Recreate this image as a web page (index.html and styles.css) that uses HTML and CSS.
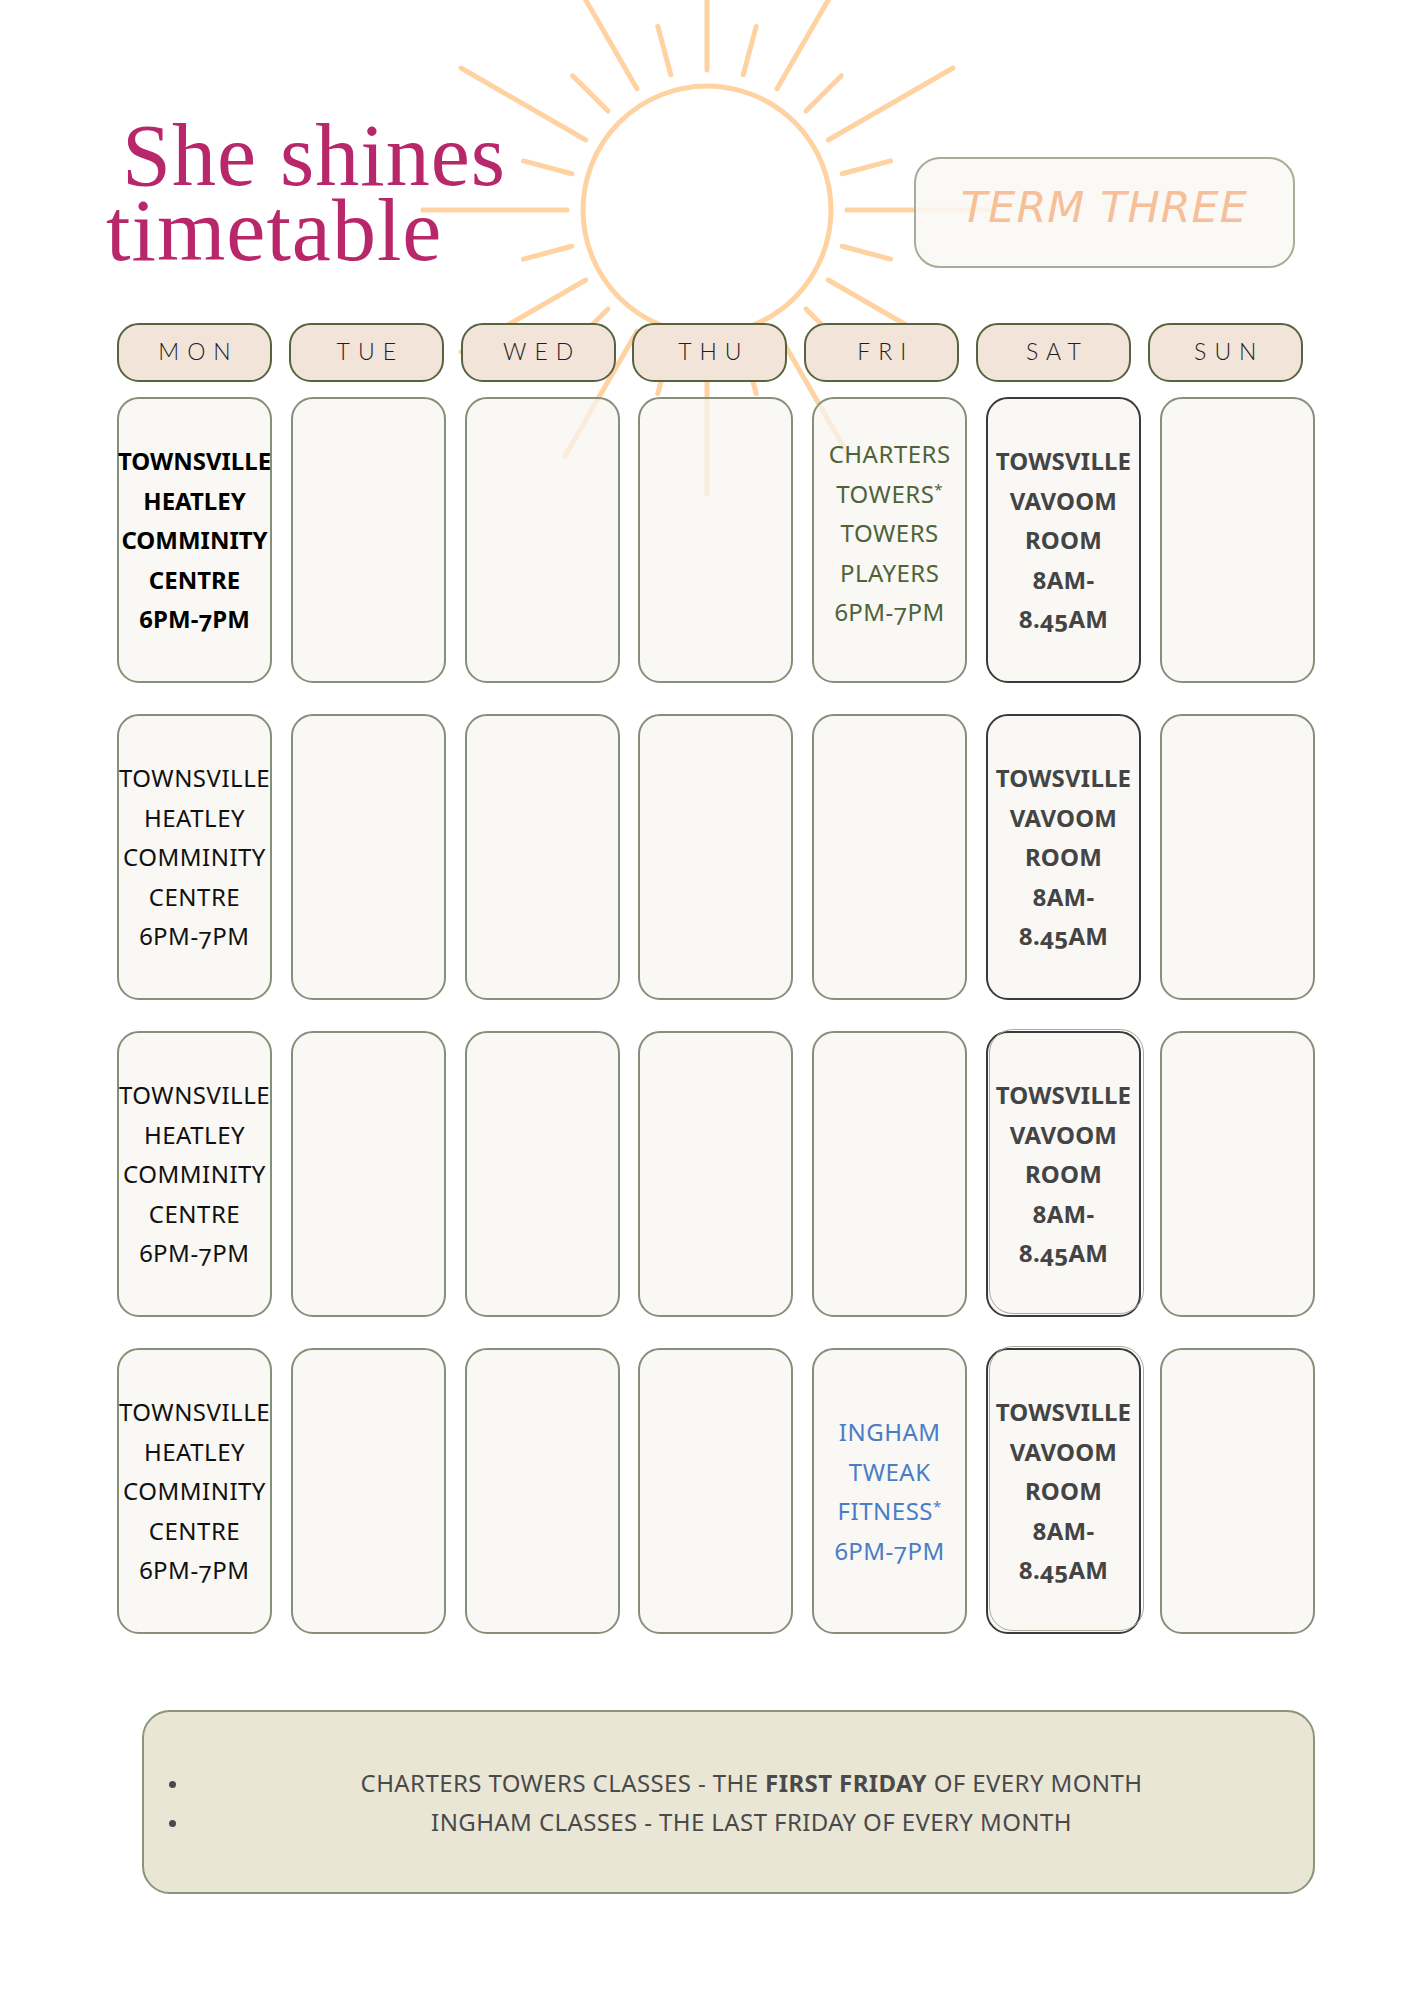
FILE: index.html
```html
<!DOCTYPE html>
<html lang="en">
<head>
<meta charset="utf-8">
<title>She shines timetable</title>
<link rel="stylesheet" href="styles.css">
</head>
<body>
<div class="page">
  <svg class="sun" width="1414" height="520" viewBox="0 0 1414 520" aria-hidden="true">
    <g transform="translate(707 210)" stroke="#FFD2A2" stroke-width="5" stroke-linecap="round" fill="none">
      <circle cx="0" cy="0" r="124"/>
      <line x1="140" y1="0" x2="284" y2="0" transform="rotate(0)"/>
      <line x1="140" y1="0" x2="190" y2="0" transform="rotate(15)"/>
      <line x1="140" y1="0" x2="284" y2="0" transform="rotate(30)"/>
      <line x1="140" y1="0" x2="190" y2="0" transform="rotate(45)"/>
      <line x1="140" y1="0" x2="284" y2="0" transform="rotate(60)"/>
      <line x1="140" y1="0" x2="190" y2="0" transform="rotate(75)"/>
      <line x1="140" y1="0" x2="284" y2="0" transform="rotate(90)"/>
      <line x1="140" y1="0" x2="190" y2="0" transform="rotate(105)"/>
      <line x1="140" y1="0" x2="284" y2="0" transform="rotate(120)"/>
      <line x1="140" y1="0" x2="190" y2="0" transform="rotate(135)"/>
      <line x1="140" y1="0" x2="284" y2="0" transform="rotate(150)"/>
      <line x1="140" y1="0" x2="190" y2="0" transform="rotate(165)"/>
      <line x1="140" y1="0" x2="284" y2="0" transform="rotate(180)"/>
      <line x1="140" y1="0" x2="190" y2="0" transform="rotate(195)"/>
      <line x1="140" y1="0" x2="284" y2="0" transform="rotate(210)"/>
      <line x1="140" y1="0" x2="190" y2="0" transform="rotate(225)"/>
      <line x1="140" y1="0" x2="284" y2="0" transform="rotate(240)"/>
      <line x1="140" y1="0" x2="190" y2="0" transform="rotate(255)"/>
      <line x1="140" y1="0" x2="284" y2="0" transform="rotate(270)"/>
      <line x1="140" y1="0" x2="190" y2="0" transform="rotate(285)"/>
      <line x1="140" y1="0" x2="284" y2="0" transform="rotate(300)"/>
      <line x1="140" y1="0" x2="190" y2="0" transform="rotate(315)"/>
      <line x1="140" y1="0" x2="284" y2="0" transform="rotate(330)"/>
      <line x1="140" y1="0" x2="190" y2="0" transform="rotate(345)"/>
    </g>
  </svg>

  <header class="hero">
    <h1 class="title"><span class="title-line first">She shines</span><span class="title-line">timetable</span></h1>
    <div class="term"><span class="term-text">TERM THREE</span></div>
  </header>

  <div class="days">
    <div class="day">MON</div>
    <div class="day">TUE</div>
    <div class="day">WED</div>
    <div class="day">THU</div>
    <div class="day">FRI</div>
    <div class="day">SAT</div>
    <div class="day">SUN</div>
  </div>

  <div class="grid">
    <!-- row 1 -->
    <div class="cell black bold"><p class="txt">TOWNSVILLE<br>HEATLEY<br>COMMINITY<br>CENTRE<br>6PM-7PM</p></div>
    <div class="cell"></div>
    <div class="cell"></div>
    <div class="cell"></div>
    <div class="cell green raised"><p class="txt">CHARTERS<br>TOWERS<sup>*</sup><br>TOWERS<br>PLAYERS<br>6PM-7PM</p></div>
    <div class="cell sat"><p class="txt">TOWSVILLE<br>VAVOOM<br>ROOM<br>8AM-<br>8.45AM</p></div>
    <div class="cell"></div>
    <!-- row 2 -->
    <div class="cell black"><p class="txt">TOWNSVILLE<br>HEATLEY<br>COMMINITY<br>CENTRE<br>6PM-7PM</p></div>
    <div class="cell"></div>
    <div class="cell"></div>
    <div class="cell"></div>
    <div class="cell"></div>
    <div class="cell sat"><p class="txt">TOWSVILLE<br>VAVOOM<br>ROOM<br>8AM-<br>8.45AM</p></div>
    <div class="cell"></div>
    <!-- row 3 -->
    <div class="cell black"><p class="txt">TOWNSVILLE<br>HEATLEY<br>COMMINITY<br>CENTRE<br>6PM-7PM</p></div>
    <div class="cell"></div>
    <div class="cell"></div>
    <div class="cell"></div>
    <div class="cell"></div>
    <div class="cell sat double"><p class="txt">TOWSVILLE<br>VAVOOM<br>ROOM<br>8AM-<br>8.45AM</p></div>
    <div class="cell"></div>
    <!-- row 4 -->
    <div class="cell black"><p class="txt">TOWNSVILLE<br>HEATLEY<br>COMMINITY<br>CENTRE<br>6PM-7PM</p></div>
    <div class="cell"></div>
    <div class="cell"></div>
    <div class="cell"></div>
    <div class="cell blue"><p class="txt">INGHAM<br>TWEAK<br>FITNESS<sup>*</sup><br>6PM-7PM</p></div>
    <div class="cell sat double"><p class="txt">TOWSVILLE<br>VAVOOM<br>ROOM<br>8AM-<br>8.45AM</p></div>
    <div class="cell"></div>
  </div>

  <section class="notes">
    <ul class="notes-list">
      <li>CHARTERS TOWERS CLASSES - THE <strong>FIRST FRIDAY</strong> OF EVERY MONTH</li>
      <li>INGHAM CLASSES - THE LAST FRIDAY OF EVERY MONTH</li>
    </ul>
  </section>
</div>
</body>
</html>
```

FILE: styles.css
```css
html, body {
  margin: 0;
  padding: 0;
  background: #ffffff;
}

.page {
  position: relative;
  width: 1414px;
  min-height: 2000px;
  padding-top: 118px;
  box-sizing: border-box;
  font-family: "Noto Sans", "Open Sans", sans-serif;
}

.sun {
  position: absolute;
  top: 0;
  left: 0;
  z-index: 0;
}

/* ---------- hero ---------- */
.hero {
  position: relative;
  z-index: 1;
  display: flex;
  justify-content: space-between;
  align-items: flex-start;
  padding: 0 119px 0 106px;
  height: 150px;
}

.title {
  margin: 0;
  font-family: "Liberation Serif", "DejaVu Serif", serif;
  font-weight: 400;
  font-size: 88px;
  line-height: 75px;
  letter-spacing: 1px;
  color: #B8276A;
}

.title-line {
  display: block;
  height: 75px;
}

.title-line.first {
  padding-left: 16px;
}

.term {
  margin-top: 39px;
  width: 381px;
  height: 111px;
  box-sizing: border-box;
  border: 2px solid #A6AD98;
  border-radius: 26px;
  background: rgba(250, 248, 244, 0.85);
  display: flex;
  align-items: center;
  justify-content: center;
  padding-bottom: 12px;
}

.term-text {
  font-family: "DejaVu Sans", sans-serif;
  font-weight: 200;
  font-style: italic;
  font-size: 43px;
  letter-spacing: 1px;
  color: #F6BF98;
}

/* ---------- day headers ---------- */
.days {
  position: relative;
  z-index: 1;
  margin: 55px 0 0 117px;
  display: grid;
  grid-template-columns: repeat(7, 155px);
  column-gap: 16.8px;
}

.day {
  height: 59px;
  box-sizing: border-box;
  border: 2px solid #56633F;
  border-radius: 22px;
  background: #F2E4D9;
  display: flex;
  align-items: center;
  justify-content: center;
  padding: 0 0 4px 8px;
  font-family: "Lato", "Open Sans", sans-serif;
  font-weight: 300;
  font-size: 23px;
  letter-spacing: 8px;
  color: #1e1e1e;
}

/* ---------- cells ---------- */
.grid {
  position: relative;
  z-index: 1;
  margin: 15px 0 0 117px;
  display: grid;
  grid-template-columns: repeat(7, 155px);
  grid-auto-rows: 286px;
  column-gap: 18.8px;
  row-gap: 31px;
}

.cell {
  position: relative;
  box-sizing: border-box;
  border: 2px solid #85907A;
  border-radius: 22px;
  background: rgba(246, 245, 240, 0.72);
  display: flex;
  align-items: center;
  justify-content: center;
}

.txt {
  margin: 0;
  text-align: center;
  font-size: 24px;
  line-height: 39.5px;
  letter-spacing: 0.5px;
  font-variant-numeric: oldstyle-nums;
  white-space: nowrap;
}

.txt sup {
  font-size: 15px;
  line-height: 0;
  vertical-align: 8px;
}

.cell.black {
  color: #111111;
}

.cell.bold .txt {
  font-weight: 700;
  letter-spacing: 0;
  color: #000000;
}

.cell.green {
  color: #4F6339;
}

.cell.raised {
  padding-bottom: 14px;
}

.cell.blue {
  color: #4A7DC6;
}

.cell.sat {
  border: 2px solid #3A3A3A;
  color: #444444;
}

.cell.sat .txt {
  font-weight: 700;
  letter-spacing: 0.2px;
}

.cell.double::after {
  content: "";
  position: absolute;
  top: -4px;
  right: -5px;
  bottom: 1px;
  left: 1px;
  border: 1.5px solid #A9AC9C;
  border-radius: 24px;
  pointer-events: none;
}

/* ---------- notes ---------- */
.notes {
  position: relative;
  z-index: 1;
  margin: 76px 0 0 142px;
  width: 1173px;
  height: 184px;
  box-sizing: border-box;
  border: 2px solid #8A9579;
  border-radius: 28px;
  background: #EAE6D6;
  display: flex;
  align-items: center;
}

.notes-list {
  margin: 0;
  padding: 0 0 0 46px;
  width: 100%;
  box-sizing: border-box;
  list-style: disc;
  font-size: 24px;
  line-height: 39px;
  letter-spacing: 0.4px;
  color: #4A4A4A;
}

.notes-list li {
  text-align: center;
}

.notes-list li::marker {
  font-size: 20px;
}

.notes-list strong {
  font-weight: 700;
}
```
